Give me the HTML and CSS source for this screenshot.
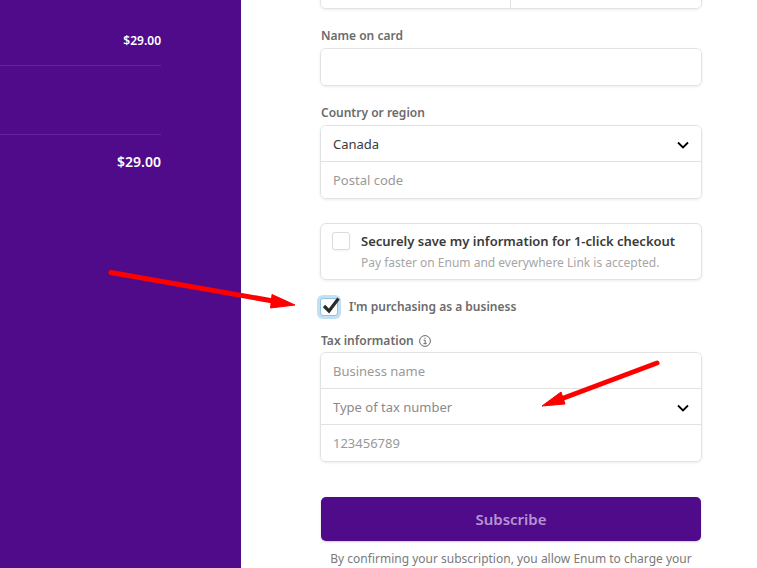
FILE: index.html
```
<!DOCTYPE html>
<html lang="en">
<head>
    <meta charset="UTF-8">
    <meta name="viewport" content="width=device-width, initial-scale=1.0">
    <title>Checkout</title>
    <link rel="stylesheet" href="styles.css">
</head>
<body>
    <div class="checkout">
        <aside class="summary">
            <div class="amount">$29.00</div>
            <div class="tax-row"></div>
            <div class="amount total">$29.00</div>
        </aside>
        <main class="payment">
            <form class="payment-form">
                <div class="field-group card-row">
                    <input type="text" class="field" aria-label="Expiration date">
                    <input type="text" class="field" aria-label="Security code">
                </div>

                <label class="field-label" for="cardName">Name on card</label>
                <div class="field-group">
                    <input type="text" id="cardName" class="field">
                </div>

                <label class="field-label" for="country">Country or region</label>
                <div class="field-group">
                    <div class="select-wrap">
                        <select id="country" class="field">
                            <option>Canada</option>
                        </select>
                        <svg class="chevron" viewBox="0 0 12 12"><path d="M1 3.5l5 5 5-5"/></svg>
                    </div>
                    <input type="text" class="field" placeholder="Postal code" aria-label="Postal code">
                </div>

                <div class="save-box">
                    <input type="checkbox" id="saveInfo" class="checkbox">
                    <div class="save-text">
                        <label for="saveInfo">Securely save my information for 1-click checkout</label>
                        <p>Pay faster on Enum and everywhere Link is accepted.</p>
                    </div>
                </div>

                <div class="business-row">
                    <span class="check-wrap">
                        <input type="checkbox" id="business" class="checkbox" checked>
                        <svg class="tick" viewBox="0 0 18 18"><path d="M3 8l5 5L17.5 .5"/></svg>
                    </span>
                    <label for="business">I'm purchasing as a business</label>
                </div>

                <div class="field-label tax-label">
                    <label for="businessName">Tax information</label>
                    <svg class="info" viewBox="0 0 12 12"><circle cx="6" cy="6" r="5.4"/><path d="M4.6 5.2h1.6v3.4M4.4 8.7h3.4M6 2.7v1.2"/></svg>
                </div>
                <div class="field-group">
                    <input type="text" id="businessName" class="field" placeholder="Business name">
                    <div class="select-wrap">
                        <select class="field empty" aria-label="Type of tax number">
                            <option>Type of tax number</option>
                        </select>
                        <svg class="chevron" viewBox="0 0 12 12"><path d="M1 3.5l5 5 5-5"/></svg>
                    </div>
                    <input type="text" class="field" placeholder="123456789" aria-label="Tax number">
                </div>

                <button type="submit" class="subscribe">Subscribe</button>
                <p class="terms">By confirming your subscription, you allow Enum to charge your</p>
            </form>
        </main>

        <!-- arrows pointing at the business checkbox and the tax type -->
        <svg class="arrow arrow-left" viewBox="0 0 190 44"><path d="M4 5.5l162 28.5"/><polygon points="165,27.5 188,38 163.5,41"/></svg>
        <svg class="arrow arrow-right" viewBox="0 0 122 52"><path d="M118 5L22 41"/><polygon points="22,34 3,48 26,46"/></svg>
    </div>
</body>
</html>
```

FILE: styles.css
```
* {
    box-sizing: border-box;
}
body {
    margin: 0;
    font-family: "Noto Sans", "Open Sans", sans-serif;
    font-size: 13px;
    line-height: 20px;
    color: #6b6b6b;
    background-color: #ffffff;
}
p {
    margin: 0;
}
.checkout {
    position: relative;
    display: grid;
    grid-template-columns: 241px 1fr;
    height: 100vh;
    overflow: hidden;
}
.summary {
    padding: 31px 80px 0 0;
    background-color: #4f0b8a;
    color: #ffffff;
    text-align: right;
}
.amount {
    font-size: 12px;
    font-weight: 600;
}
.tax-row {
    height: 70px;
    margin: 14px 0 17px;
    border-top: 1px solid #6424a0;
    border-bottom: 1px solid #6424a0;
}
.total {
    font-size: 14px;
}
.payment {
    padding: 0 55px 0 79px;
}
.payment-form {
    margin-top: -29px; /* form is scrolled past the card number */
}
.field-group {
    display: flex;
    flex-direction: column;
    border: 1px solid #e2e2e2;
    border-radius: 6px;
    box-shadow: 0 1px 3px rgba(0, 0, 0, 0.08);
    overflow: hidden;
}
.field {
    display: block;
    width: 100%;
    height: 36px;
    padding: 0 12px;
    border: none;
    border-bottom: 1px solid #e2e2e2;
    border-radius: 0;
    outline: none;
    appearance: none;
    background-color: #ffffff;
    font-family: inherit;
    font-size: 13px;
    color: #3a3a3a;
}
.field-group > .field:last-child {
    border-bottom: none;
}
.card-row {
    flex-direction: row;
}
.card-row .field {
    border-bottom: none;
}
.card-row .field:first-child {
    border-right: 1px solid #e2e2e2;
}
.field::placeholder {
    color: #999999;
    opacity: 1;
}
.field.empty {
    color: #8a8a8a;
}
.select-wrap {
    position: relative;
}
.chevron {
    position: absolute;
    top: 13px;
    right: 12px;
    width: 12px;
    height: 12px;
    fill: none;
    stroke: #000000;
    stroke-width: 1.8;
    pointer-events: none;
}
.field-label {
    display: block;
    margin: 17px 0 2px 1px;
    font-size: 12px;
    font-weight: 600;
}
.save-box {
    display: flex;
    gap: 11px;
    margin-top: 24px;
    padding: 7px 11px 6px;
    border: 1px solid #e2e2e2;
    border-radius: 6px;
    box-shadow: 0 1px 3px rgba(0, 0, 0, 0.08);
}
.save-box .checkbox {
    margin-top: 1px;
}
.save-text label {
    font-weight: 600;
    color: #3a3a3a;
}
.save-text p {
    margin-top: 2px;
    font-size: 12px;
    color: #a6a6a6;
}
.checkbox {
    flex: none;
    display: block;
    width: 18px;
    height: 18px;
    margin: 0;
    border: 1px solid #dcdcdc;
    border-radius: 3px;
    appearance: none;
    background-color: #ffffff;
    box-shadow: 0 1px 2px rgba(0, 0, 0, 0.06);
}
.business-row {
    display: flex;
    align-items: center;
    gap: 11px;
    margin-top: 17px;
    font-size: 12px;
    font-weight: 600;
}
.check-wrap {
    position: relative;
}
.check-wrap .checkbox {
    border-color: #8fc4e4;
    box-shadow: 0 0 0 3px #c1e0f3;
}
.tick {
    position: absolute;
    top: 0;
    left: 1px;
    width: 18px;
    height: 18px;
    overflow: visible;
    fill: none;
    stroke: #2b2b2b;
    stroke-width: 3.2;
    pointer-events: none;
}
.tax-label {
    display: flex;
    align-items: center;
    gap: 5px;
    margin: 14px 0 1px 1px;
}
.info {
    width: 12px;
    height: 12px;
    fill: none;
    stroke: #666666;
}
.subscribe {
    display: block;
    width: calc(100% - 2px);
    height: 44px;
    margin: 35px 1px 8px;
    border: none;
    border-radius: 5px;
    background-color: #4f0b8a;
    box-shadow: 0 1px 2px rgba(0, 0, 0, 0.2);
    font-family: inherit;
    font-size: 15px;
    font-weight: 600;
    color: #b593d2;
}
.terms {
    text-align: center;
    font-size: 12px;
    color: #7a7a7a;
}
.arrow {
    position: absolute;
    stroke: #ff0000;
    fill: none;
    pointer-events: none;
}
.arrow path {
    stroke-width: 5;
    stroke-linecap: round;
}
.arrow polygon {
    fill: #ff0000;
}
.arrow-left {
    top: 267px;
    left: 107px;
    width: 190px;
    height: 44px;
}
.arrow-right {
    top: 358px;
    left: 539px;
    width: 122px;
    height: 52px;
}
```
